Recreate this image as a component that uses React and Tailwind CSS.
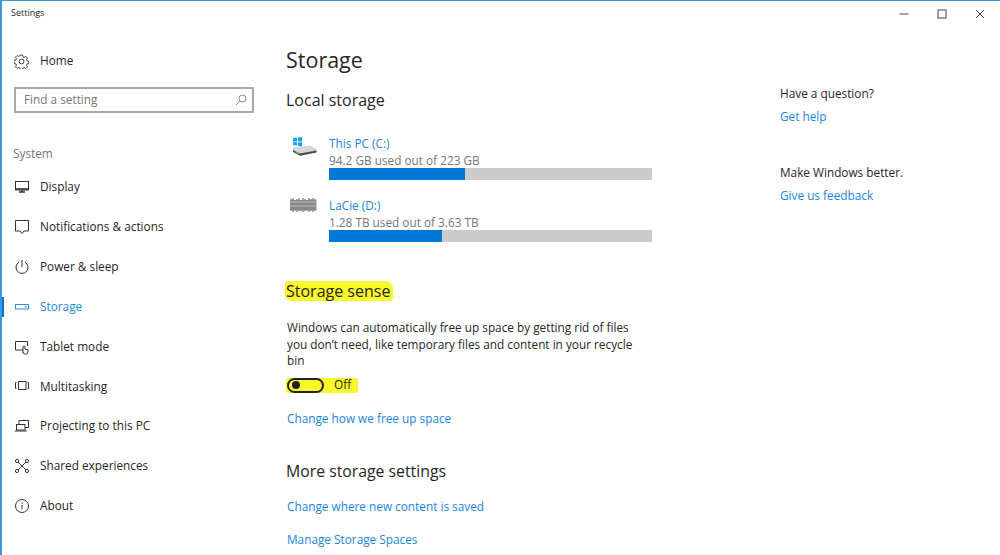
const S = ({ children, className = "w-[16px] h-[16px]" }) => (
  <svg viewBox="0 0 16 16" fill="none" stroke="#333" strokeWidth="1" className={className}>{children}</svg>
);

const icons = {
  display: <S><rect x="1.5" y="2.5" width="13" height="8.5" /><path d="M1.5 10h13" strokeWidth="1.6" /><path d="M5 13h6M8 11v2" strokeWidth="1.4" /></S>,
  notif: <S><path d="M1.5 1.5h13v10.5H10l-2 2.5-2-2.5H1.5z" /></S>,
  power: <S><path d="M8 1v7" /><path d="M5 3.2a6 6 0 1 0 6 0" /></S>,
  storage: <S><rect x="1.5" y="5.5" width="13" height="4.5" stroke="#2b90e0" /><path d="M10.5 7.8h2.5" stroke="#2b90e0" /></S>,
  tablet: <S><path d="M9 11H1.5V2.5h12V7" /><path d="M9 14v-6a1 1 0 0 1 2 0v2l3 .8v2.2a2.5 2.5 0 0 1-2.5 2.2h-.5A2.5 2.5 0 0 1 9 13" /></S>,
  multi: <S><rect x="4.5" y="3.5" width="7.5" height="8" /><path d="M2.5 4.5H1.5v6h1M13.5 4.5h1v6h-1" /></S>,
  project: <S><path d="M5 6.5V2.5h9.5v7H11" /><rect x="2.5" y="6.5" width="8.5" height="5.5" /><path d="M.8 13h12" /></S>,
  shared: <S><path d="M4 4l8 8M12 4l-8 8" /><circle cx="3" cy="3" r="1.6" fill="#fff" /><circle cx="13" cy="3" r="1.6" fill="#fff" /><circle cx="3" cy="13" r="1.6" fill="#fff" /><circle cx="13" cy="13" r="1.6" fill="#fff" /></S>,
  about: <S><circle cx="8" cy="8" r="6.5" /><path d="M8 7v4.5M8 4.5v1.2" /></S>,
};

const nav = [
  ["Display", "display"],
  ["Notifications & actions", "notif"],
  ["Power & sleep", "power"],
  ["Storage", "storage", true],
  ["Tablet mode", "tablet"],
  ["Multitasking", "multi"],
  ["Projecting to this PC", "project"],
  ["Shared experiences", "shared"],
  ["About", "about"],
];

const WinIcon = () => (
  <svg viewBox="0 0 25 19" className="w-[25px] h-[19px] block">
    <path d="M1 10.5 L18 8.5 L24.5 12 L24.5 15 L8 18.5 L1 14z" fill="#d6d6d6" />
    <path d="M1 13 L8 16.5 L24.5 13.5 L24.5 15.5 L8 18.8 L1 15z" fill="#4a4a4a" />
    <path d="M4 15.6l3 1" stroke="#7fc77f" />
    <path d="M1 1.2l4-.7V4.4H1zM5.8.4L10 0v4.4H5.8zM1 5.2h4v3.4l-4-.5zM5.8 5.2H10v4.3l-4.2-.6z" fill="#14a5e8" />
  </svg>
);

const LacieIcon = () => (
  <svg viewBox="0 0 27 14" className="w-[27px] h-[14px] block">
    <rect x="0" y="2" width="27" height="10" fill="#c4c4c4" />
    <path d="M1 1v12M3 0v14M5 2v11M7 1v13M9 0v13M11 2v11M13 0v14M15 1v12M17 2v11M19 0v14M21 1v12M23 0v14M25 1v12" stroke="#4f4f4f" strokeWidth="1" />
    <path d="M0 4h27M0 8h27" stroke="#dddddd" strokeWidth=".6" />
  </svg>
);

const Drive = ({ icon, name, used, pct, className, iconClass }) => (
  <div className={`flex ${className}`}>
    <div className={`w-[43px] ${iconClass}`}>{icon}</div>
    <div className="w-[323px]">
      <div className="text-[#1a86dc] leading-[17px]">{name}</div>
      <div className="text-[#767676] leading-[16px]">{used}</div>
      <div className="h-[12px] bg-[#cccccc]">
        <div className="h-full bg-[#0078d7]" style={{ width: pct }} />
      </div>
    </div>
  </div>
);

export default function App() {
  return (
    <div
      className="w-[1000px] h-[555px] overflow-hidden bg-white border-t border-l-2 border-t-[#3a96dd] border-l-[#3a96dd] text-[#262626] text-[11.8px]"
      style={{ fontFamily: '"Open Sans", "Noto Sans", sans-serif' }}
    >
      <div className="h-[27px] flex items-start justify-between">
        <div className="pl-[9px] pt-[5px] text-[9px] leading-[14px]">Settings</div>
        <div className="flex pr-[1px]">
          <div className="w-[38px] h-[26px] flex items-center justify-center">
            <svg viewBox="0 0 10 10" className="w-[10px] h-[10px]"><path d="M.5 5h9" stroke="#444" /></svg>
          </div>
          <div className="w-[38px] h-[26px] flex items-center justify-center">
            <svg viewBox="0 0 10 10" className="w-[10px] h-[10px]"><rect x="1" y="1" width="8" height="8" fill="none" stroke="#444" /></svg>
          </div>
          <div className="w-[38px] h-[26px] flex items-center justify-center">
            <svg viewBox="0 0 10 10" className="w-[10px] h-[10px]"><path d="M1 1l8 8M9 1L1 9" stroke="#444" /></svg>
          </div>
        </div>
      </div>

      <div className="flex">
        <aside className="w-[284px] shrink-0">
          <div className="flex items-center h-[24px] mt-[21px] pl-[12px]">
            <svg viewBox="0 0 16 16" fill="none" stroke="#333" className="w-[15px] h-[15px]">
              <circle cx="8" cy="8" r="2.6" />
              <path d="M6.8 1h2.4l.4 2 1.3.6 1.8-1 1.7 1.7-1 1.8.6 1.3 2 .4v2.4l-2 .4-.6 1.3 1 1.8-1.7 1.7-1.8-1-1.3.6-.4 2H6.8l-.4-2-1.3-.6-1.8 1-1.7-1.7 1-1.8-.6-1.3-2-.4V6.8l2-.4.6-1.3-1-1.8 1.7-1.7 1.8 1 1.3-.6z" />
            </svg>
            <span className="ml-[11px]">Home</span>
          </div>
          <div className="ml-[12px] mt-[14px] w-[240px] h-[26px] border-2 border-[#a8a8a8] flex items-center justify-between pl-[8px] pr-[5px] text-[#767676]">
            <span>Find a setting</span>
            <svg viewBox="0 0 12 12" fill="none" stroke="#888" className="w-[12px] h-[12px]"><circle cx="7.5" cy="4.5" r="3.5" /><path d="M5 7l-4 4" /></svg>
          </div>
          <div className="pl-[11px] mt-[31px] h-[18px] leading-[18px] text-[#767676]">System</div>
          <nav className="mt-[5px]">
            {nav.map(([label, icon, active]) => (
              <div key={label} className="h-[39.9px] flex items-center relative">
                {active && <div className="absolute left-[-2px] top-[10px] w-[4px] h-[20px] bg-[#0078d7]" />}
                <div className="pl-[12px] w-[38px] shrink-0">{icons[icon]}</div>
                <span className={active ? "text-[#1a86dc]" : ""}>{label}</span>
              </div>
            ))}
          </nav>
        </aside>

        <main className="w-[494px] shrink-0">
          <h1 className="text-[21.5px] leading-[30px] mt-[17px]">Storage</h1>
          <h2 className="text-[16px] leading-[22px] mt-[14px]">Local storage</h2>
          <Drive className="mt-[24px]" iconClass="pl-[6px] pt-[2px]" icon={<WinIcon />} name="This PC (C:)" used="94.2 GB used out of 223 GB" pct="42%" />
          <Drive className="mt-[17px]" iconClass="pl-[4px] pt-[1px]" icon={<LacieIcon />} name="LaCie (D:)" used="1.28 TB used out of 3.63 TB" pct="35%" />

          <div className="mt-[39px] w-fit bg-[#f8f82a] pr-[3px] pl-[1px] -ml-[1px] rounded-[3px_8px_3px_6px]">
            <h2 className="text-[16px] leading-[20px]">Storage sense</h2>
          </div>
          <p className="mt-[18px] w-[360px] leading-[16.5px] pl-[1px]">
            Windows can automatically free up space by getting rid of files you don’t need, like temporary files and content in your recycle bin
          </p>
          <div className="mt-[9px] w-[72px] h-[15px] bg-[#f8f82a] flex items-center rounded-[3px]">
            <div className="w-[37px] h-[15px] rounded-full border-2 border-[#222] flex items-center pl-[3px] ml-[1px]">
              <div className="w-[8px] h-[8px] rounded-full bg-[#222]" />
            </div>
            <span className="ml-[10px]">Off</span>
          </div>
          <div className="mt-[16px] pl-[1px] text-[#1a86dc] leading-[18px]">Change how we free up space</div>
          <h2 className="text-[15.8px] leading-[22px] mt-[33px]">More storage settings</h2>
          <div className="mt-[15px] pl-[1px] text-[#1a86dc] leading-[18px]">Change where new content is saved</div>
          <div className="mt-[15px] pl-[1px] text-[#1a86dc] leading-[18px]">Manage Storage Spaces</div>
        </main>

        <aside className="flex-1">
          <div className="mt-[56px] leading-[18px]">Have a question?</div>
          <div className="mt-[5px] text-[#1a86dc] leading-[18px]">Get help</div>
          <div className="mt-[38px] leading-[18px]">Make Windows better.</div>
          <div className="mt-[5px] text-[#1a86dc] leading-[18px]">Give us feedback</div>
        </aside>
      </div>
    </div>
  );
}
